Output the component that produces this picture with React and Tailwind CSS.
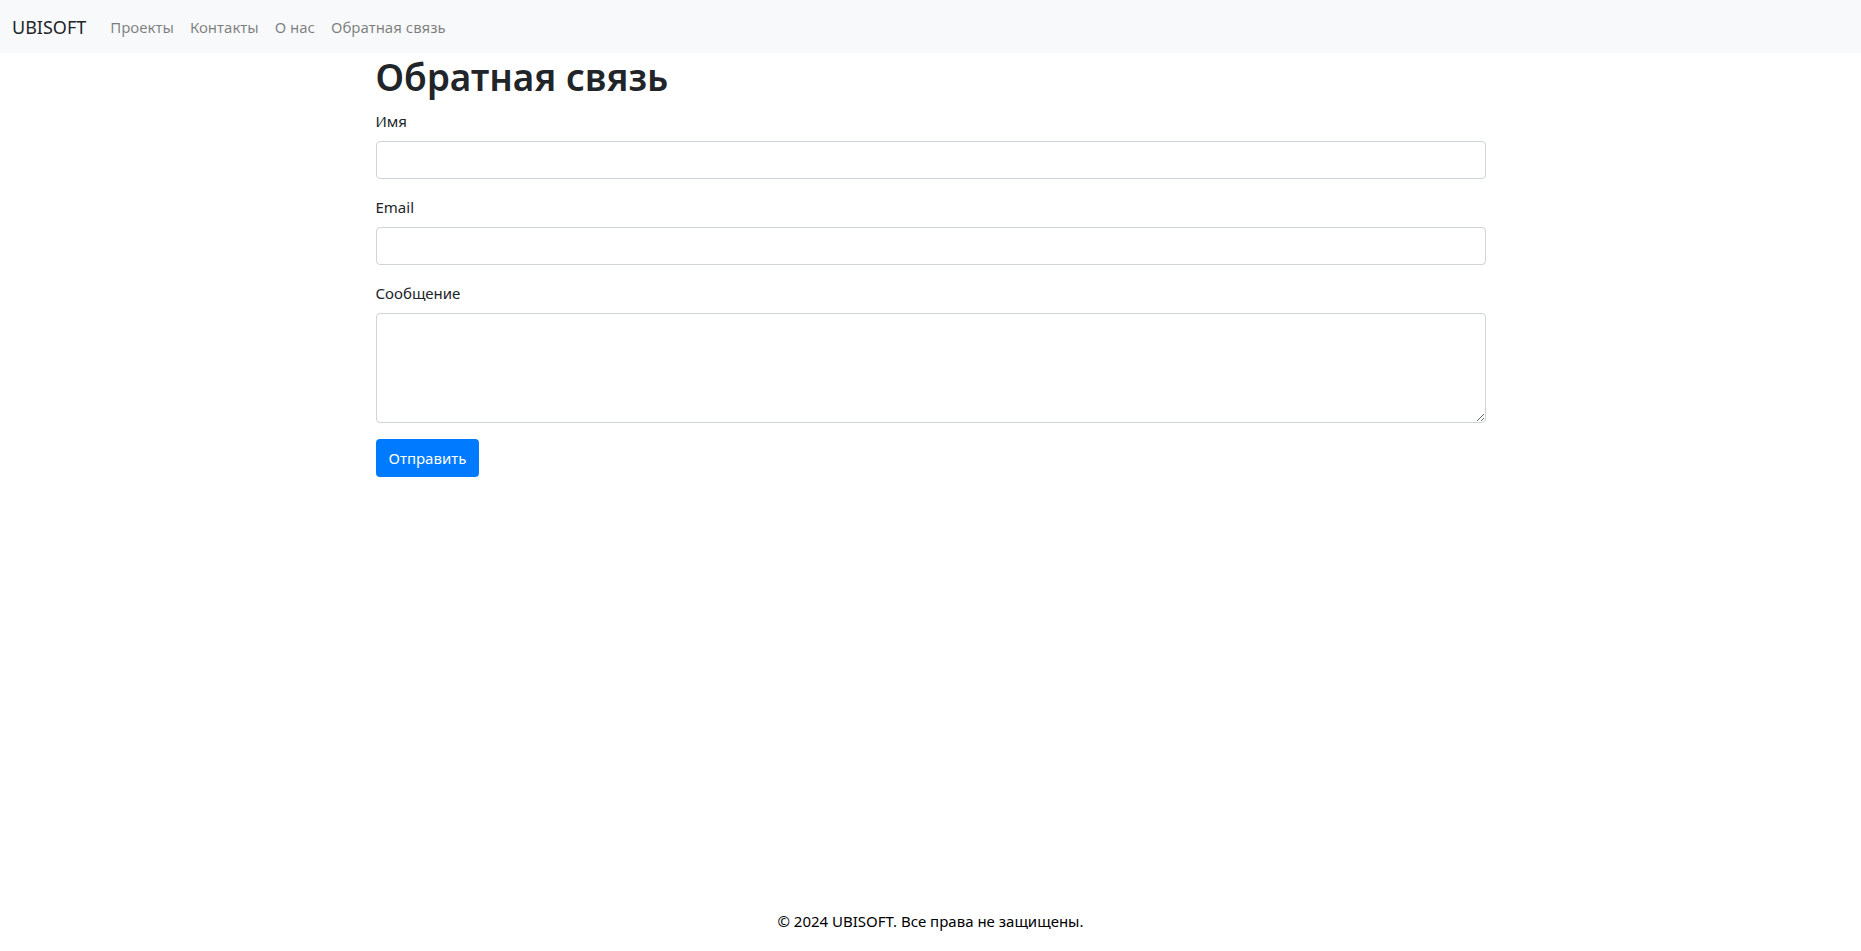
export default function App() {
  const links = ["Проекты", "Контакты", "О нас", "Обратная связь"];
  return (
    <div
      className="min-h-screen flex flex-col bg-white text-[#212529]"
      style={{ fontFamily: '"Noto Sans", "Open Sans", Arial, sans-serif' }}
    >
      <nav className="h-[53px] bg-[#f8f9fa] flex items-center pl-3">
        <a className="text-[18px] text-[#212529] mr-4 leading-[30px]">UBISOFT</a>
        <ul className="flex">
          {links.map((l) => (
            <li key={l}>
              <a className="block px-2 text-[15px] text-black/50 leading-6">{l}</a>
            </li>
          ))}
        </ul>
      </nav>

      <main className="flex-1">
        <div className="w-[1140px] mx-auto px-[15px]">
          <h1 className="text-[37px] font-semibold leading-[48px] mb-2">Обратная связь</h1>
          <form>
            <div className="mb-4">
              <label className="block text-[15px] leading-6 mb-2">Имя</label>
              <input className="block w-full h-[38px] border border-[#ced4da] rounded px-3" />
            </div>
            <div className="mb-4">
              <label className="block text-[15px] leading-6 mb-2">Email</label>
              <input className="block w-full h-[38px] border border-[#ced4da] rounded px-3" />
            </div>
            <div className="mb-4">
              <label className="block text-[15px] leading-6 mb-2">Сообщение</label>
              <textarea className="block w-full h-[110px] border border-[#ced4da] rounded px-3 py-1.5" />
            </div>
            <button
              type="button"
              className="h-[38px] px-[13px] bg-[#007bff] text-white text-[15px] rounded"
            >
              Отправить
            </button>
          </form>
        </div>
      </main>

      <footer className="pt-[14px] pb-[18px] text-center text-[15px] leading-6 text-black">
        © 2024 UBISOFT. Все права не защищены.
      </footer>
    </div>
  );
}
